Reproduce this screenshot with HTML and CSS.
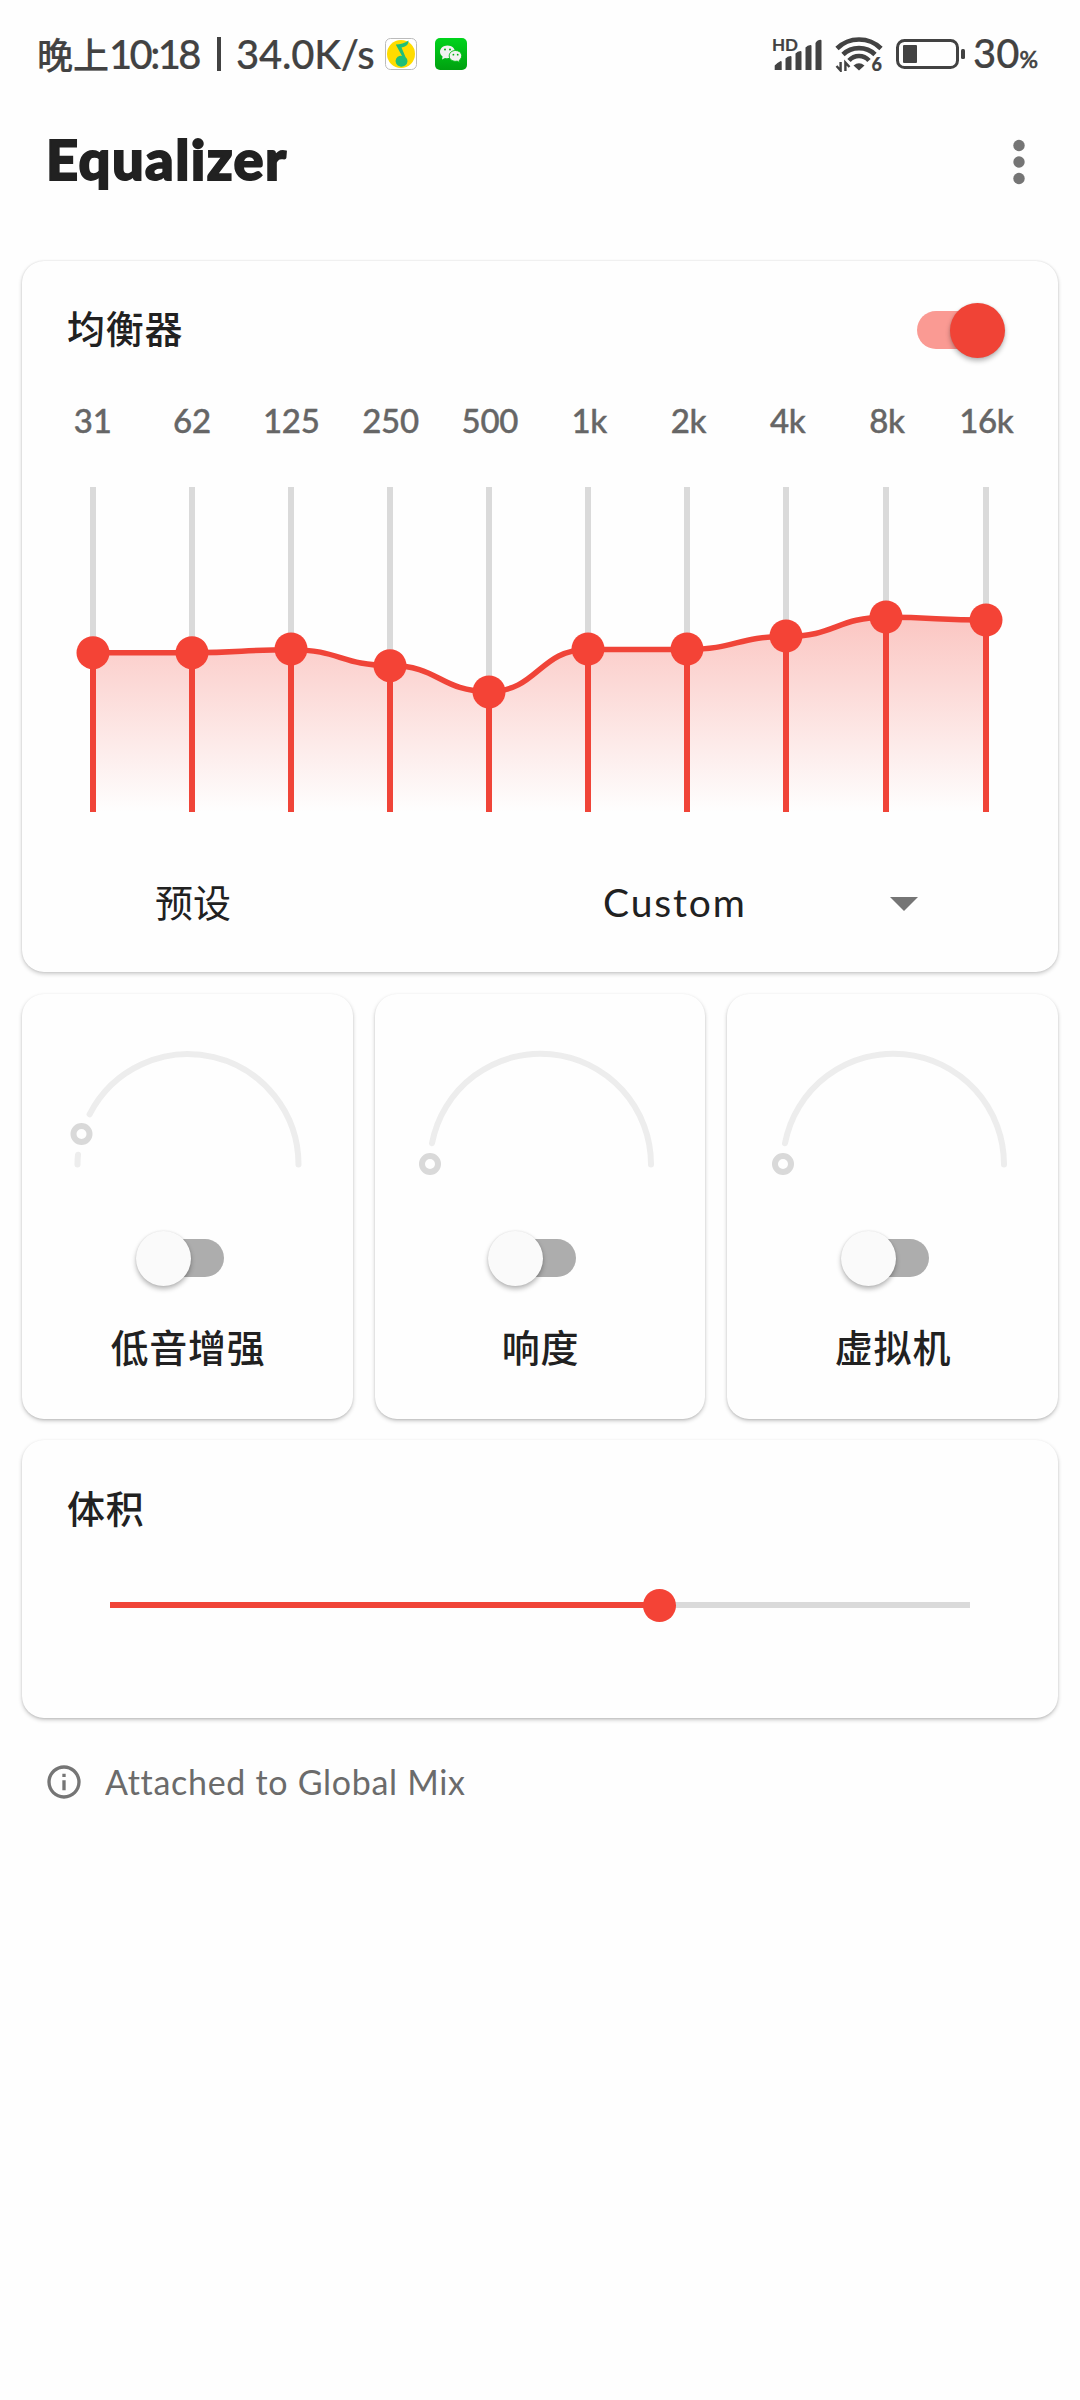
FILE: index.html
```html
<!DOCTYPE html>
<html lang="zh-CN">
<head>
    <meta charset="UTF-8">
    <meta name="viewport" content="width=device-width, initial-scale=1.0">
    <title>Equalizer</title>
    <link rel="stylesheet" href="styles.css">
</head>
<body>
    <div class="status-bar">
        <span class="clock">晚上<span class="time">10:18</span></span>
        <span class="divider"></span>
        <span class="speed">34.0K/s</span>
        <svg class="app-icon music" viewBox="0 0 32 32">
            <rect x="0.5" y="0.5" width="31" height="31" rx="5" fill="#fff" stroke="#bbb"/>
            <circle cx="16" cy="16" r="14" fill="#ffdc00"/>
            <path d="M11 6.500C15 6.500 20 5 23.500 2.500C23.500 6 22 8.500 16.500 9.500L20.500 19A6 5.500 0 1 1 15 17.800L17 18L11 7Z" fill="#1fbf78"/>
        </svg>
        <svg class="app-icon" viewBox="0 0 32 32">
            <defs>
                <linearGradient id="chat" x1="0" y1="0" x2="0" y2="1">
                    <stop offset="0" stop-color="#00d41c"/>
                    <stop offset="1" stop-color="#00a010"/>
                </linearGradient>
            </defs>
            <rect width="32" height="32" rx="5" fill="url(#chat)"/>
            <path d="M12.500 7.500c-4.300 0-7.500 2.900-7.500 6.300 0 2 1 3.600 2.600 4.800L7 21.500l3-1.600c3.600 1 10-.5 10-6.100 0-3.400-3.200-6.300-7.500-6.300z" fill="#f2f2f2"/>
            <path d="M20.500 12.500c-3.700 0-6.300 2.400-6.300 5.400 0 3.700 4 6.100 8 5.200l2.600 1.500-.6-2.300c4.700-3.400 2.400-9.800-3.700-9.800z" fill="#f2f2f2" stroke="#00b914" stroke-width="0.9"/>
            <g fill="#00b012">
                <circle cx="10" cy="11.500" r="1"/>
                <circle cx="15" cy="11.500" r="1"/>
                <circle cx="18.400" cy="16.700" r="0.900"/>
                <circle cx="22.700" cy="16.700" r="0.900"/>
            </g>
        </svg>
        <div class="status-right">
            <div class="signal">
                <span class="hd">HD</span>
                <svg width="50" height="34" viewBox="0 0 50 34" fill="#424242">
                    <path d="M2.700 33v-4.500q2.500-3 6-4.500q1 0 1 1v8zM13.500 33V21.500q2-2.500 5-2.500q1 0 1 1v13zM23.500 33V16.500q2-2.500 5-2.500q1 0 1 1v18zM33.500 33V10.500q2-2.500 5-2.500q1 0 1 1v24zM43.500 33V6q2-3.300 5-3.300q1 0 1 1V33z"/>
                </svg>
            </div>
            <div class="wifi">
                <svg width="48" height="36" viewBox="0 0 48 36">
                    <g fill="none" stroke="#424242" stroke-width="4.600">
                        <path d="M2 12.500C14 .5 34 .5 46 12.500"/>
                        <path d="M8 18.500C16.500 10 31.500 10 40 18.500"/>
                        <path d="M14 24.500C19.500 18.500 28.500 18.500 34 24.500"/>
                    </g>
                    <path d="M18.500 29.500q5.500-4.500 11 0L24 34.500z" fill="#424242"/>
                    <path d="M5.600 26v8.500L1.500 30M10.400 35v-8.500l4.100 4.500" fill="none" stroke="#424242" stroke-width="2.400"/>
                </svg>
                <span class="wifi-gen">6</span>
            </div>
            <svg class="battery" width="70" height="30" viewBox="0 0 70 30">
                <rect x="1.500" y="1.500" width="60" height="27" rx="7" fill="none" stroke="#424242" stroke-width="3"/>
                <rect x="7" y="6" width="14" height="18" rx="1" fill="#424242"/>
                <rect x="65" y="10" width="4" height="10" rx="1.500" fill="#424242"/>
            </svg>
            <span class="percent">30<small>%</small></span>
        </div>
    </div>

    <header>
        <h1>Equalizer</h1>
        <svg width="12" height="46" viewBox="0 0 12 46" fill="#757575">
            <circle cx="6" cy="6.500" r="5.700"/>
            <circle cx="6" cy="23" r="5.700"/>
            <circle cx="6" cy="39.500" r="5.700"/>
        </svg>
    </header>

    <main>
        <section class="card equalizer">
            <div class="card-head">
                <h2>均衡器</h2>
                <div class="switch on"><span class="thumb"></span></div>
            </div>
            <div class="bands">
                <span>31</span>
                <span>62</span>
                <span>125</span>
                <span>250</span>
                <span>500</span>
                <span>1k</span>
                <span>2k</span>
                <span>4k</span>
                <span>8k</span>
                <span>16k</span>
            </div>
            <svg class="chart" viewBox="22 440 1036 394">
                <defs>
                    <linearGradient id="fade" gradientUnits="userSpaceOnUse" x1="0" y1="487" x2="0" y2="812">
                        <stop offset="0" stop-color="#f44336" stop-opacity="0.5"/>
                        <stop offset="1" stop-color="#f44336" stop-opacity="0"/>
                    </linearGradient>
                </defs>
                <path d="M93 487V812M192 487V812M291 487V812M390 487V812M489 487V812M588 487V812M687 487V812M786 487V812M886 487V812M986 487V812" stroke="#dadada" stroke-width="6"/>
                <path d="M93 652.700H192C241 652.700 242 649.700 291 649.700C340 649.700 341 665.500 390 665.500C439 665.500 440 691.500 489 691.500C538 691.500 539 649.400 588 649.400H687C736 649.400 737 636.500 786 636.500C836 636.500 836 617.300 886 617.300C936 617.300 936 620 986 620V812H93Z" fill="url(#fade)"/>
                <g fill="none" stroke="#f04438">
                    <path stroke-width="5.500" d="M93 652.700H192C241 652.700 242 649.700 291 649.700C340 649.700 341 665.500 390 665.500C439 665.500 440 691.500 489 691.500C538 691.500 539 649.400 588 649.400H687C736 649.400 737 636.500 786 636.500C836 636.500 836 617.300 886 617.300C936 617.300 936 620 986 620"/>
                    <path stroke-width="6" d="M93 653V812M192 653V812M291 649V812M390 666V812M489 692V812M588 649V812M687 649V812M786 636V812M886 617V812M986 620V812"/>
                </g>
                <g fill="#f44336">
                    <circle cx="93" cy="652.700" r="16.500"/>
                    <circle cx="192" cy="652.700" r="16.500"/>
                    <circle cx="291" cy="649" r="16.500"/>
                    <circle cx="390" cy="665.700" r="16.500"/>
                    <circle cx="489" cy="691.900" r="16.500"/>
                    <circle cx="588" cy="649" r="16.500"/>
                    <circle cx="687" cy="649" r="16.500"/>
                    <circle cx="786" cy="636" r="16.500"/>
                    <circle cx="886" cy="617" r="16.500"/>
                    <circle cx="986" cy="620" r="16.500"/>
                </g>
            </svg>
            <div class="preset">
                <span class="preset-label">预设</span>
                <div class="preset-select">
                    <span>Custom</span>
                    <span class="arrow"></span>
                </div>
            </div>
        </section>

        <div class="effects">
            <section class="card effect">
                <svg class="dial" viewBox="0 0 250 142">
                    <g fill="none" stroke="#ededed" stroke-width="6" stroke-linecap="round">
                        <path d="M14.500 130.500Q14.500 125 15 120.700"/>
                        <path d="M26.600 80.300A110.500 110.500 0 0 1 235.500 130.500"/>
                    </g>
                    <circle cx="18.500" cy="100" r="8" fill="none" stroke="#d9d9d9" stroke-width="6"/>
                </svg>
                <div class="switch"><span class="thumb"></span></div>
                <h2>低音增强</h2>
            </section>
            <section class="card effect">
                <svg class="dial" viewBox="0 0 250 142">
                    <path d="M17 109.300A110.500 110.500 0 0 1 236 130.500" fill="none" stroke="#ededed" stroke-width="6" stroke-linecap="round"/>
                    <circle cx="15" cy="130" r="8" fill="none" stroke="#d9d9d9" stroke-width="6"/>
                </svg>
                <div class="switch"><span class="thumb"></span></div>
                <h2>响度</h2>
            </section>
            <section class="card effect">
                <svg class="dial" viewBox="0 0 250 142">
                    <path d="M17 109.300A110.500 110.500 0 0 1 236 130.500" fill="none" stroke="#ededed" stroke-width="6" stroke-linecap="round"/>
                    <circle cx="15" cy="130" r="8" fill="none" stroke="#d9d9d9" stroke-width="6"/>
                </svg>
                <div class="switch"><span class="thumb"></span></div>
                <h2>虚拟机</h2>
            </section>
        </div>

        <section class="card volume">
            <h2>体积</h2>
            <div class="slider">
                <span class="fill"></span>
                <span class="knob"></span>
                <span class="rest"></span>
            </div>
        </section>
    </main>

    <footer>
        <svg width="40" height="40" viewBox="0 0 24 24" fill="#757575">
            <path d="M11 7h2v2h-2zm0 4h2v6h-2zm1-9C6.480 2 2 6.480 2 12s4.480 10 10 10 10-4.480 10-10S17.520 2 12 2zm0 18c-4.410 0-8-3.590-8-8s3.590-8 8-8 8 3.590 8 8-3.590 8-8 8z"/>
        </svg>
        <span>Attached to Global Mix</span>
    </footer>
</body>
</html>
```
FILE: styles.css
```css
* {
    box-sizing: border-box;
}
body {
    font-family: Lato, "Noto Sans CJK SC", sans-serif;
    margin: 0;
    padding: 0;
    width: 1080px;
    min-height: 2400px;
    background-color: #fefefe;
    color: #212121;
}
svg {
    display: block;
    flex: none;
}
h1, h2 {
    margin: 0;
}

/* status bar */
.status-bar {
    display: flex;
    align-items: center;
    height: 108px;
    padding: 0 42px 0 37px;
    font-size: 40px;
    line-height: 48px;
    color: #424242;
    font-weight: 500;
    white-space: nowrap;
    -webkit-text-stroke: 0.2px #424242;
}
.clock {
    flex: none;
    width: 167px;
    font-size: 36px;
}
.time {
    font-size: 40px;
    letter-spacing: -2.6px;
}
.divider {
    flex: none;
    width: 4px;
    height: 34px;
    margin: 0 15px 0 13px;
    background-color: #424242;
}
.speed {
    flex: none;
    width: 149px;
    letter-spacing: -0.2px;
}
.app-icon {
    width: 32px;
    height: 32px;
}
.music {
    margin-right: 18px;
}
.status-right {
    display: flex;
    align-items: center;
    margin-left: auto;
}
.signal {
    position: relative;
    margin-right: 13px;
}
.hd {
    position: absolute;
    left: 0;
    top: -1px;
    font-size: 17px;
    line-height: 17px;
    font-weight: 700;
}
.wifi {
    position: relative;
    margin-right: 13px;
}
.wifi-gen {
    position: absolute;
    right: 1px;
    bottom: -1px;
    font-size: 18px;
    line-height: 18px;
    font-weight: 900;
}
.battery {
    margin-right: 7px;
}
.percent {
    width: 65px;
    padding-top: 3px;
}
.percent small {
    font-size: 23px;
    -webkit-text-stroke: 0.6px #424242;
}

/* title bar */
header {
    display: flex;
    justify-content: space-between;
    align-items: center;
    height: 108px;
    padding: 0 55px 0 46px;
}
header h1 {
    font-size: 56px;
    line-height: 64px;
    font-weight: 900;
    letter-spacing: 1.4px;
    padding-bottom: 6px;
    -webkit-text-stroke: 1.8px #212121;
}

/* cards */
main {
    padding: 45px 22px 0;
}
.card {
    background-color: #fefefe;
    border-radius: 22px;
    box-shadow: 0 2px 4px rgba(0, 0, 0, 0.2), 0 0 2px rgba(0, 0, 0, 0.12);
}
.card h2 {
    font-size: 38px;
    line-height: 48px;
    font-weight: 500;
    letter-spacing: 0.8px;
}
.equalizer {
    height: 711px;
}
.card-head {
    display: flex;
    justify-content: space-between;
    align-items: center;
    height: 138px;
    padding: 0 54px 0 45px;
}
.card-head h2 {
    padding-bottom: 4px;
}
.switch {
    display: flex;
    align-items: center;
    width: 87px;
    height: 38px;
    border-radius: 19px;
    background-color: #adadad;
}
.thumb {
    flex: none;
    width: 55px;
    height: 55px;
    margin-left: -1px;
    border-radius: 50%;
    background-color: #fafafa;
    box-shadow: 0 3px 5px rgba(0, 0, 0, 0.28), 0 0 2px rgba(0, 0, 0, 0.1);
}
.switch.on {
    background-color: #fa9a93;
    justify-content: flex-end;
}
.switch.on .thumb {
    margin-right: -1px;
    background-color: #f04336;
}
.bands {
    display: grid;
    grid-template-columns: repeat(10, 1fr);
    height: 41px;
    margin: 0 22px 0 21px;
    font-size: 33px;
    line-height: 43px;
    font-weight: 500;
    letter-spacing: -0.3px;
    text-align: center;
    color: #666;
    -webkit-text-stroke: 0.4px #666;
}
.chart {
    width: 1036px;
    height: 394px;
}
.preset {
    display: flex;
    align-items: center;
    height: 136px;
    padding: 0 140px 0 133px;
    font-size: 38px;
    line-height: 48px;
}
.preset-select {
    display: flex;
    justify-content: space-between;
    align-items: center;
    margin-left: auto;
    width: 315px;
    font-size: 39px;
    letter-spacing: 1.9px;
}
.arrow {
    border: 14px solid transparent;
    border-top-color: #757575;
    border-bottom: 0;
    margin-top: 4px;
}

/* effect dials */
.effects {
    display: grid;
    grid-template-columns: 331px 330px 331px;
    justify-content: space-between;
    margin: 22px 0 21px;
}
.effect, .volume {
    box-shadow: 0 2px 4px rgba(0, 0, 0, 0.2), 0 1px 2px rgba(0, 0, 0, 0.1);
}
.effect {
    display: flex;
    flex-direction: column;
    align-items: center;
    height: 425px;
    padding-top: 40px;
}
.dial {
    width: 250px;
    height: 142px;
}
.effect .switch {
    margin: 63px 15px 46px 0;
}
.effect h2 {
    padding-left: 1px;
}

/* volume */
.volume {
    height: 278px;
    padding: 44px 88px 0;
}
.volume h2 {
    margin-left: -43px;
}
.slider {
    display: flex;
    align-items: center;
    height: 34px;
    margin-top: 56px;
}
.fill {
    width: 550px;
    height: 6px;
    background-color: #f04438;
}
.knob {
    width: 33px;
    height: 33px;
    margin: 0 -17px;
    border-radius: 50%;
    background-color: #f44336;
    z-index: 1;
}
.rest {
    flex: 1;
    height: 6px;
    background-color: #dadada;
}

footer {
    display: flex;
    align-items: center;
    gap: 21px;
    padding: 44px 0 0 44px;
    font-size: 34px;
    line-height: 40px;
    letter-spacing: 0.7px;
    color: #6b6b6b;
}
```
